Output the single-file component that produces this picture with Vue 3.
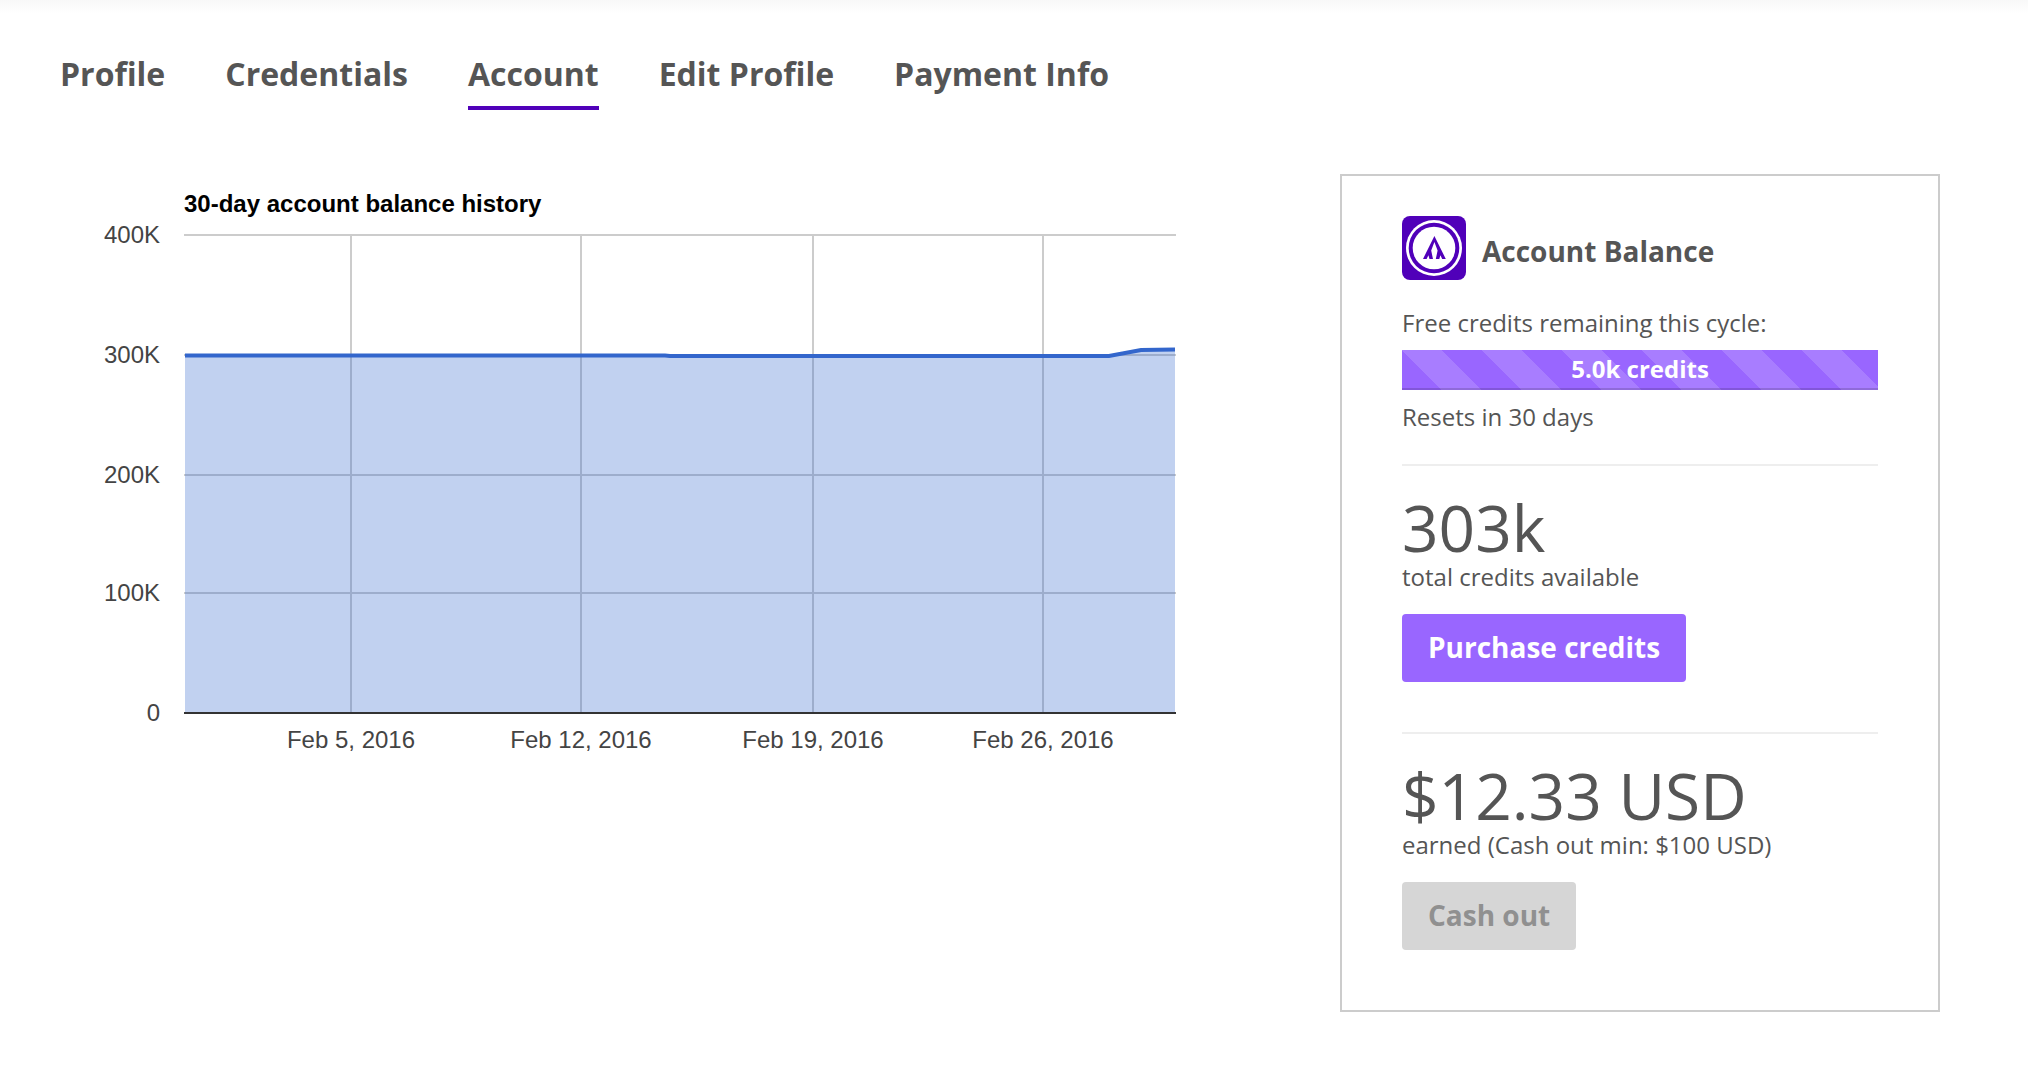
<script setup>
import { ref } from 'vue'

const tabs = ['Profile', 'Credentials', 'Account', 'Edit Profile', 'Payment Info']
const active = ref('Account')

const rows = [
  { label: '400K', y: 61 },
  { label: '300K', y: 181 },
  { label: '200K', y: 301 },
  { label: '100K', y: 419 },
  { label: '0', y: 539 },
]
const cols = [
  { label: 'Feb 5, 2016', x: 291 },
  { label: 'Feb 12, 2016', x: 521 },
  { label: 'Feb 19, 2016', x: 753 },
  { label: 'Feb 26, 2016', x: 983 },
]
const balance = '125,181.6 605,181.6 610,182 1049,182 1081,176 1115,175.6'
</script>

<template>
  <div class="page">
    <nav class="tabs" aria-label="Account sections">
      <a
        v-for="tab in tabs"
        :key="tab"
        href="#"
        :class="['tab', { active: tab === active }]"
        @click.prevent="active = tab"
      >{{ tab }}</a>
    </nav>

    <main class="content">
      <section class="history">
        <svg class="chart" viewBox="0 0 1240 600" role="img" aria-label="30-day account balance history">
          <text class="chart-title" x="124" y="38">30-day account balance history</text>
          <g class="grid">
            <line v-for="c in cols" :key="c.label" :x1="c.x" :x2="c.x" y1="62" y2="538" />
            <line v-for="r in rows.slice(0, 4)" :key="r.label" x1="124" x2="1116" :y1="r.y" :y2="r.y" />
          </g>
          <polygon class="area" :points="`125,539 ${balance} 1115,539`" />
          <line class="axis" x1="124" x2="1116" y1="539" y2="539" />
          <polyline class="line" :points="balance" />
          <text v-for="r in rows" :key="r.label" class="label" text-anchor="end" x="100" :y="r.y + 8">{{ r.label }}</text>
          <text v-for="c in cols" :key="c.label" class="label" text-anchor="middle" :x="c.x" y="574">{{ c.label }}</text>
        </svg>
      </section>

      <aside class="card">
        <header class="card-head">
          <svg class="logo" viewBox="0 0 64 64" aria-hidden="true">
            <rect width="64" height="64" rx="8" fill="#5000b9" />
            <circle cx="32" cy="32" r="28" fill="#fff" />
            <circle cx="32" cy="32" r="25.3" fill="#5000b9" />
            <circle cx="32" cy="32" r="21.3" fill="#fff" />
            <path
              d="M32.4 20 43.8 43H40.2L38.4 39.2 37.3 43H33.8L35.6 34.6 32.4 26 29.2 34.6 31 43H27.5L26.4 39.2 24.6 43H21Z"
              fill="#5000b9"
            />
          </svg>
          <h2>Account Balance</h2>
        </header>

        <p class="text">Free credits remaining this cycle:</p>
        <div class="meter">5.0k credits</div>
        <p class="text">Resets in 30 days</p>

        <section class="block">
          <p class="amount">303k</p>
          <p class="text">total credits available</p>
          <button type="button" class="btn">Purchase credits</button>
        </section>

        <section class="block">
          <p class="amount">$12.33 USD</p>
          <p class="text">earned (Cash out min: $100 USD)</p>
          <button type="button" class="btn" disabled>Cash out</button>
        </section>
      </aside>
    </main>
  </div>
</template>

<style>
body {
  margin: 0;
  background: #fff;
}
</style>

<style scoped>
.page {
  box-sizing: border-box;
  padding: 52px 88px 64px 60px;
  font-family: "Open Sans", sans-serif;
  color: #555;
  background: linear-gradient(#f8f8f8, #fff 14px);
}
.tabs {
  display: flex;
  flex-wrap: wrap;
  gap: 0 60px;
}
.tab {
  padding-bottom: 10px;
  border-bottom: 4px solid transparent;
  font-size: 32px;
  line-height: 44px;
  font-weight: 700;
  color: #555;
  text-decoration: none;
}
.tab.active {
  border-color: #5000b9;
}
.content {
  display: grid;
  grid-template-columns: minmax(0, 1fr) 600px;
  gap: 40px;
  align-items: start;
  margin-top: 64px;
}
.chart {
  display: block;
  width: 100%;
  font-family: "Liberation Sans", Arial, sans-serif;
  font-size: 24px;
}
.chart-title {
  font-weight: 700;
  fill: #000;
}
.label {
  fill: #444;
}
.grid {
  stroke: #ccc;
  stroke-width: 2;
}
.axis {
  stroke: #333;
  stroke-width: 2;
}
.area {
  fill: #3366cc;
  fill-opacity: 0.3;
}
.line {
  fill: none;
  stroke: #3366cc;
  stroke-width: 4;
}
.card {
  box-sizing: border-box;
  padding: 40px 60px 60px;
  border: 2px solid #ccc;
}
.card-head {
  display: flex;
  gap: 16px;
  margin-bottom: 20px;
}
.logo {
  flex: none;
  width: 64px;
  height: 64px;
}
h2 {
  margin: 0;
  font-size: 28px;
  line-height: 70px;
  font-weight: 700;
}
.text {
  margin: 0;
  font-size: 24px;
  line-height: 34px;
}
.meter {
  margin: 10px 0;
  padding-bottom: 2px;
  font-size: 24px;
  line-height: 38px;
  font-weight: 700;
  color: #fff;
  text-align: center;
  background: #9966ff linear-gradient(45deg, rgba(255, 255, 255, 0.15) 25%, transparent 25%, transparent 50%, rgba(255, 255, 255, 0.15) 50%, rgba(255, 255, 255, 0.15) 75%, transparent 75%) 0 0 / 80px 80px;
  box-shadow: inset 0 -2px 0 rgba(0, 0, 0, 0.15);
}
.block {
  margin-top: 30px;
  padding-top: 30px;
  border-top: 2px solid #eee;
}
.block + .block {
  margin-top: 50px;
}
.amount {
  margin: 0;
  font-size: 64px;
  line-height: 64px;
}
.btn {
  display: block;
  height: 68px;
  margin-top: 20px;
  padding: 0 26px 2px;
  border: 0;
  border-radius: 4px;
  font: 700 28px/40px "Open Sans", sans-serif;
  color: #fff;
  background: #9966ff;
  cursor: pointer;
}
.btn:disabled {
  color: #909090;
  background: #d6d6d6;
  cursor: default;
}
</style>
